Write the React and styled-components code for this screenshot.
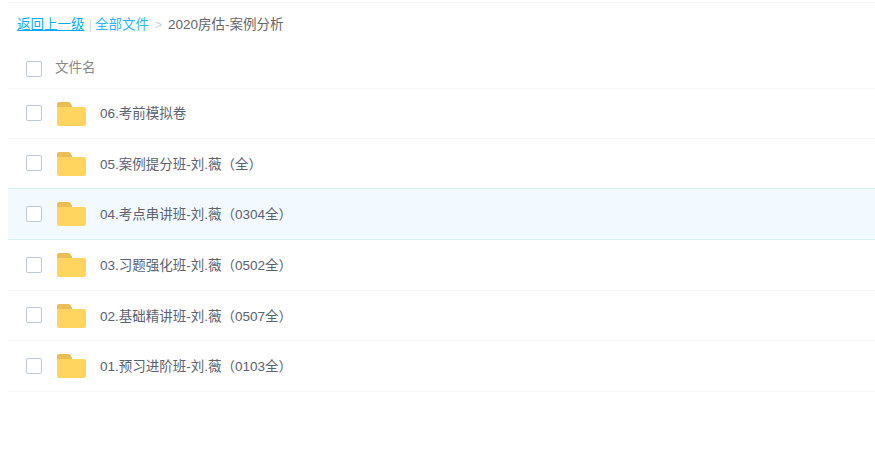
import React from "react";
import styled, { createGlobalStyle } from "styled-components";

const Global = createGlobalStyle`
  html, body { margin: 0; padding: 0; background: #fff; }
  body { font-family: "Liberation Sans", "Noto Sans CJK SC", sans-serif; font-size: 13.5px; color: #666; }
`;

const Page = styled.div`
  width: 875px;
  height: 451px;
  padding: 2px 0 0 8px;
  box-sizing: border-box;
  overflow: hidden;
`;

const Panel = styled.div`
  border-top: 1px solid #f4f6f8;
`;

const Crumbs = styled.nav`
  height: 43px;
  display: flex;
  align-items: center;
  padding: 0 0 0 9px;
  box-sizing: border-box;
  line-height: 20px;
  white-space: pre;
`;

const Back = styled.a`
  color: #09aaff;
  text-decoration: underline;
`;

const Sep = styled.span`
  color: #c5d8ea;
  margin: 0 3px 0 4px;
`;

const Root = styled.a`
  color: #09aaff;
  opacity: 0.85;
`;

const Chevron = styled.span`
  color: #c5d0dc;
  margin: 0 6px;
  font-size: 12px;
`;

const Current = styled.span`
  color: #666;
`;

const Row = styled.div`
  height: ${(p) => p.$height}px;
  box-sizing: border-box;
  display: flex;
  align-items: center;
  padding-left: 18px;
  border-bottom: 1px solid ${(p) => (p.$active ? "#d9edf7" : "#f4f6f8")};
  margin-top: ${(p) => (p.$active ? "-1px" : "0")};
  border-top: ${(p) => (p.$active ? "1px solid #d9edf7" : "0")};
  background: ${(p) => (p.$active ? "#f2faff" : "transparent")};
`;

const Check = styled.span`
  width: 14px;
  height: 14px;
  border: 1px solid #bccadb;
  border-radius: 2px;
  background: #fff;
  flex: none;
  margin-top: ${(p) => (p.$head ? "4px" : "-1px")};
`;

const HeadLabel = styled.span`
  margin: -2px 0 0 13px;
  color: #888;
`;

const FolderIcon = styled.svg`
  width: 29px;
  height: 24px;
  margin-left: 15px;
  flex: none;
`;

const Name = styled.span`
  margin: ${(p) => (p.$lift ? "-3px" : "-2px")} 0 0 14px;
  color: #5b6270;
  white-space: nowrap;
`;

const files = [
  ["06.考前模拟卷", 50, false, true],
  ["05.案例提分班-刘.薇（全）", 50],
  ["04.考点串讲班-刘.薇（0304全）", 52, true],
  ["03.习题强化班-刘.薇（0502全）", 51],
  ["02.基础精讲班-刘.薇（0507全）", 50],
  ["01.预习进阶班-刘.薇（0103全）", 51],
];

const Folder = () => (
  <FolderIcon viewBox="0 0 29 24" aria-hidden="true">
    <path d="M0 2a2 2 0 0 1 2-2h9.5a2 2 0 0 1 1.6.8L15 3.5V8H0z" fill="#edbd55" />
    <path d="M0 5h27a2 2 0 0 1 2 2v15a2 2 0 0 1-2 2H2a2 2 0 0 1-2-2z" fill="#ffd55f" />
  </FolderIcon>
);

export default function App() {
  return (
    <Page>
      <Global />
      <Panel>
        <Crumbs>
          <Back>返回上一级</Back>
          <Sep>|</Sep>
          <Root>全部文件</Root>
          <Chevron>&gt;</Chevron>
          <Current>2020房估-案例分析</Current>
        </Crumbs>
        <Row $height={43}>
          <Check $head />
          <HeadLabel>文件名</HeadLabel>
        </Row>
        {files.map(([name, h, active, lift]) => (
          <Row key={name} $height={h} $active={active}>
            <Check />
            <Folder />
            <Name $lift={lift}>{name}</Name>
          </Row>
        ))}
      </Panel>
    </Page>
  );
}
